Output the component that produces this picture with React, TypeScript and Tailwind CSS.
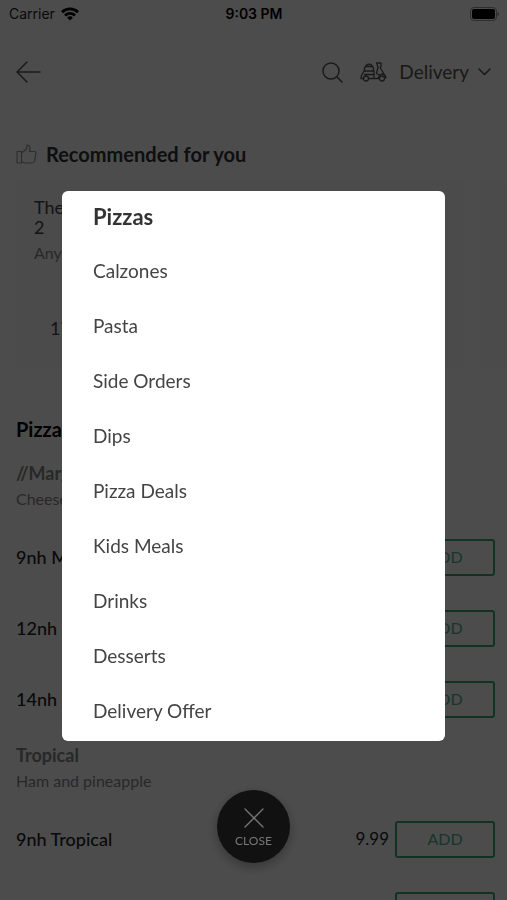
const categories = [
  'Pizzas',
  'Calzones',
  'Pasta',
  'Side Orders',
  'Dips',
  'Pizza Deals',
  'Kids Meals',
  'Drinks',
  'Desserts',
  'Delivery Offer',
];

type MenuGroup = { name: string; description: string; sizes: { label: string; price: string }[] };

const groups: MenuGroup[] = [
  {
    name: '//Margherita',
    description: 'Cheese',
    sizes: [
      { label: '9nh Margherita', price: '8.99' },
      { label: '12nh', price: '11.99' },
      { label: '14nh', price: '13.99' },
    ],
  },
  {
    name: 'Tropical',
    description: 'Ham and pineapple',
    sizes: [
      { label: '9nh Tropical', price: '9.99' },
      { label: '12nh Tropical', price: '12.99' },
    ],
  },
];

function StatusBar() {
  return (
    <div className="grid h-7 shrink-0 grid-cols-3 items-center bg-white pr-2 pl-[9px] font-['Inter',sans-serif] text-sm text-black">
      <div className="flex items-center gap-[6px] text-[#222]">
        <span>Carrier</span>
        <svg width="18" height="14" viewBox="0 0 18 14" fill="none" stroke="#000" strokeWidth="2.8" aria-hidden="true">
          <path d="M1 5.2a11.4 11.4 0 0 1 16 0" />
          <path d="M4 8.4a7.1 7.1 0 0 1 10 0" />
          <path d="M9 13.6 6.1 10.7a4.1 4.1 0 0 1 5.8 0Z" fill="#000" stroke="none" />
        </svg>
      </div>
      <span className="text-center font-semibold">9:03 PM</span>
      <svg className="justify-self-end" width="29" height="14" viewBox="0 0 29 14" aria-hidden="true">
        <rect x="0.5" y="0.5" width="26" height="13" rx="3.5" fill="none" stroke="#999" />
        <rect x="2" y="2" width="23" height="10" rx="2" fill="#000" />
        <path d="M27.5 5v4q1.5-.6 1.5-2T27.5 5Z" fill="#888" />
      </svg>
    </div>
  );
}

function ScooterIcon() {
  return (
    <svg width="27" height="20" viewBox="0 0 27 20" fill="none" stroke="currentColor" strokeWidth="1.3" strokeLinecap="round" strokeLinejoin="round" aria-hidden="true">
      <path d="M4.5 9Q4 5.5 6 3.5q3-2.5 6 0 2 2 1.5 5.500M5.500 4.500h7" />
      <path d="M4 9h10v3.500H4.500M4 9 1.500 13.500 1 16.500h2.500" />
      <path d="M8.500 16.500h10q.2-3.500 3-4.500 3.500-.2 4.500 3.500l-1.500 1M14 12.500v4" />
      <circle cx="6" cy="16.500" r="2.500" />
      <circle cx="22" cy="16.500" r="2.500" />
      <path d="M16.500 1h4.500v3.500l-1 1 4 6.500M16.500 1l1.500 4-1.500 6.500 3 1.500" />
    </svg>
  );
}

function Header() {
  return (
    <header className="flex h-[88px] shrink-0 items-center pr-4 pl-4 text-[#555]">
      <button aria-label="Back">
        <svg width="25" height="22" viewBox="0 0 25 22" fill="none" stroke="currentColor" strokeWidth="1.5" strokeLinecap="round" strokeLinejoin="round" aria-hidden="true">
          <path d="M24 11H1M11 1 1 11l10 10" />
        </svg>
      </button>
      <button className="ml-auto" aria-label="Search">
        <svg width="21" height="21" viewBox="0 0 21 21" fill="none" stroke="currentColor" strokeWidth="1.5" strokeLinecap="round" aria-hidden="true">
          <circle cx="9" cy="9" r="8" />
          <path d="m15 15 5 5" />
        </svg>
      </button>
      <button className="ml-[17px] flex items-center text-[19px]">
        <ScooterIcon />
        <span className="ml-3">Delivery</span>
        <svg className="ml-[9px]" width="13" height="8" viewBox="0 0 13 8" fill="none" stroke="currentColor" strokeWidth="1.6" strokeLinecap="round" strokeLinejoin="round" aria-hidden="true">
          <path d="m1 1 5.5 5.500L12 1" />
        </svg>
      </button>
    </header>
  );
}

function Recommended() {
  return (
    <section className="shrink-0 pl-4">
      <h2 className="mt-6 flex h-7 items-center gap-[9px] text-xl font-bold text-[#333]">
        <svg width="21" height="20" viewBox="0 0 21 20" fill="none" stroke="#999" strokeWidth="1.2" strokeLinejoin="round" aria-hidden="true">
          <path d="M1 7.5h4.500V19H2q-1 0-1-1Z" />
          <path d="M5.500 9 10 5.500q1-1.500 1-4.500 3 0 3 3.500 0 1.500-.7 3H18q2.200 0 2 2l-1.400 7.500q-.4 2-2.600 2H8.500l-3-1.500" />
        </svg>
        Recommended for you
      </h2>
      <div className="mt-[10px] flex gap-4 overflow-hidden">
        <article className="h-[190px] w-full shrink basis-[448px] bg-[#fafafa] px-[18px] pt-[19px] text-lg leading-5 text-[#444]">
          <h3>
            The
            <br />2
          </h3>
          <p className="mt-[6px] text-base leading-5 text-[#888]">Any</p>
          <p className="mt-[55px] pl-4">17</p>
        </article>
        <div className="w-[27px] shrink-0 bg-[#fafafa]" />
      </div>
    </section>
  );
}

function MenuSection({ name, description, sizes }: MenuGroup) {
  return (
    <article>
      <div className="h-[69px] pt-2">
        <h3 className="text-lg leading-6 font-bold text-[#888]">{name}</h3>
        <p className="mt-[2px] text-base leading-6 text-[#888]">{description}</p>
      </div>
      {sizes.map((size) => (
        <div key={size.label} className="flex h-[71px] items-center text-lg text-[#222]">
          <span className="pb-[2px] font-medium">{size.label}</span>
          <span className="ml-auto text-[17px]">{size.price}</span>
          <button className="ml-[6px] h-[37px] w-[100px] rounded-[3px] border-2 border-[#41a877] pb-[2px] text-base text-[#52b383]">
            ADD
          </button>
        </div>
      ))}
    </article>
  );
}

function CategoryDialog() {
  return (
    <div className="fixed inset-0 flex flex-col items-center bg-black/70 px-[62px] pt-[191px]">
      <nav aria-label="Categories" className="w-full shrink-0 overflow-hidden rounded-md bg-white text-[#444]">
        {categories.map((name, i) => (
          <button
            key={name}
            className={
              i === 0
                ? 'flex h-[55px] w-full items-center px-[31px] pb-1 text-[22px] font-bold text-[#333]'
                : 'flex h-[55px] w-full items-center px-[31px] pb-1 text-[19px]'
            }
          >
            {name}
          </button>
        ))}
      </nav>
      <button className="mt-[49px] flex size-[73px] shrink-0 flex-col items-center rounded-full bg-[#111] pt-[18px] text-xs text-[#777] shadow-[0_4px_12px_rgba(0,0,0,0.3)]">
        <svg width="20" height="20" viewBox="0 0 20 20" fill="none" stroke="currentColor" strokeWidth="1.3" strokeLinecap="round" aria-hidden="true">
          <path d="m1 1 18 18M19 1 1 19" />
        </svg>
        <span className="mt-[5px]">CLOSE</span>
      </button>
    </div>
  );
}

export default function App() {
  return (
    <main className="flex h-screen flex-col overflow-hidden bg-white font-['Lato',sans-serif]">
      <StatusBar />
      <Header />
      <Recommended />
      <section className="shrink-0 pr-3 pl-4">
        <h2 className="mt-[47px] mb-[10px] h-7 text-xl leading-7 font-bold text-black">Pizzas</h2>
        {groups.map((group) => (
          <MenuSection key={group.name} {...group} />
        ))}
      </section>
      <CategoryDialog />
    </main>
  );
}
